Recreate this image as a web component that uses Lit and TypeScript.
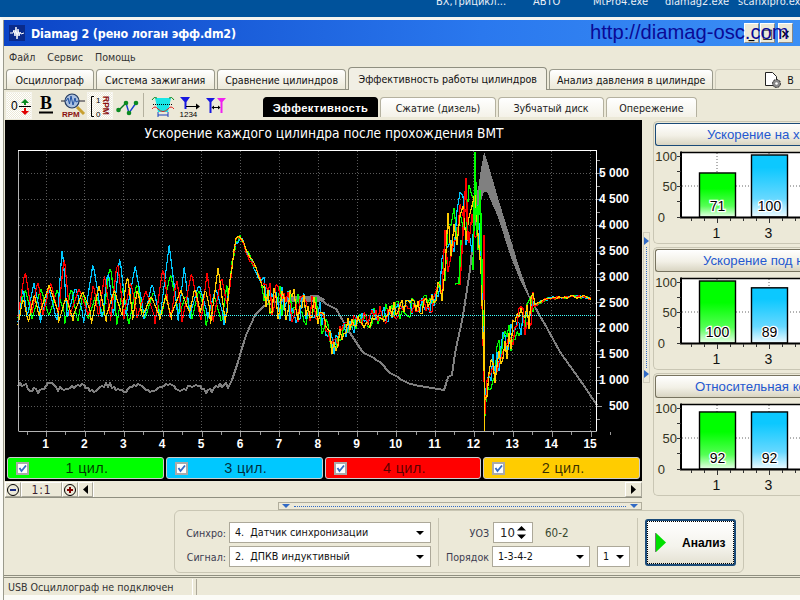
import { LitElement, html, css, svg } from "lit";
import { customElement, property } from "lit/decorators.js";

type Pt = [number, number];

function rng(seed: number) {
  return () => {
    seed = (seed + 0x6d2b79f5) | 0;
    let t = Math.imul(seed ^ (seed >>> 15), 1 | seed);
    t = (t + Math.imul(t ^ (t >>> 7), 61 | t)) ^ t;
    return ((t ^ (t >>> 14)) >>> 0) / 4294967296;
  };
}

function at(pts: Pt[], x: number) {
  for (let i = 1; i < pts.length; i++) {
    if (x <= pts[i][0]) {
      const [x0, y0] = pts[i - 1];
      const [x1, y1] = pts[i];
      return y0 + ((y1 - y0) * (x - x0)) / (x1 - x0);
    }
  }
  return pts[pts.length - 1][1];
}

const MEAN: Pt[] = [
  [228, 300], [232, 265], [236, 242], [240, 236], [246, 250], [255, 268], [262, 283], [270, 298],
  [300, 306], [320, 310], [326, 325], [333, 346], [340, 335], [350, 325], [365, 320], [380, 315],
  [400, 308], [420, 305], [436, 300], [441, 275], [445, 245], [452, 222], [460, 222], [470, 215],
  [478, 225], [483, 240],
];
const AFTER: Pt[] = [
  [485, 405], [490, 380], [500, 352], [510, 338], [520, 325], [530, 310], [538, 303], [550, 298],
  [570, 297], [585, 297], [592, 299],
];
const GREY: Pt[] = [
  [228, 388], [232, 380], [236, 368], [240, 355], [246, 335], [255, 315], [265, 305], [275, 302],
  [295, 300], [318, 299], [325, 303], [337, 310], [345, 325], [353, 337], [363, 352], [380, 362],
  [390, 373], [410, 384], [420, 386], [445, 390], [447, 378], [452, 375], [455, 352], [460, 330],
  [463, 316], [470, 270], [475, 220], [478, 190],
];
const BAND_TOP: Pt[] = [[476, 205], [480, 175], [484, 152], [487, 160], [498, 198], [510, 237], [520, 270], [530, 297]];
const BAND_BOT: Pt[] = [[476, 215], [484, 192], [487, 192], [498, 217], [510, 255], [520, 280], [530, 300]];
const GREY_END: Pt[] = [[530, 298], [540, 316], [547, 328], [560, 352], [580, 380], [597, 405]];

function colorTrace(seed: number, low: number, high: number) {
  const r = rng(seed);
  const pts: string[] = [];
  // idle section: sharp teeth, one per cylinder cycle
  let x = 18;
  let y = 300;
  while (x < 226) {
    const period = 9 + r() * 10;
    const peak = low - r() * high - (r() > 0.75 ? 20 : 0);
    const valley = 326 - r() * 14;
    for (let t = 0; t < period; t += 1.5) {
      const half = period / 2;
      y = t < half ? valley + ((peak - valley) * t) / half : peak + ((valley - peak) * (t - half)) / half;
      if (x + t < 228) pts.push(`${(x + t).toFixed(1)},${y.toFixed(1)}`);
    }
    x += period;
  }
  // run-up and the compression stroke
  for (x = 228; x < 484; x += x > 440 ? 3 : 2) {
    let amp = 4;
    if (x > 262) amp = 17;
    if (x > 325) amp = 10;
    if (x > 440) amp = 34;
    pts.push(`${x},${(at(MEAN, x) + (r() - 0.45) * amp * 2).toFixed(1)}`);
  }
  for (x = 485; x < 592; x += 2) {
    const amp = x < 535 ? 18 : 1.5;
    pts.push(`${x},${(at(AFTER, x) + (r() - 0.5) * amp * 2).toFixed(1)}`);
  }
  return pts.join(" ");
}

function greyTrace() {
  const r = rng(77);
  const pts: string[] = [];
  for (let x = 18; x < 228; x += 2) {
    const y = 388 + Math.sin(x / 4.6) * 3 + (r() - 0.5) * 5;
    pts.push(`${x},${Math.round(y)}`);
  }
  for (let x = 228; x <= 478; x += 2) pts.push(`${x},${Math.round(at(GREY, x))}`);
  return pts.join(" ");
}

const bandPoints = [...BAND_TOP, ...[...BAND_BOT].reverse()].map((p) => p.join(",")).join(" ");
const greyEnd = GREY_END.map((p) => p.join(",")).join(" ");

const TRACES = [
  { color: "#00ff00", points: colorTrace(11, 296, 14) },
  { color: "#00c8ff", points: colorTrace(23, 288, 24) },
  { color: "#ff0000", points: colorTrace(37, 294, 24) },
  { color: "#ffcc00", points: colorTrace(51, 298, 14) },
];
const GREY_LINE = greyTrace();

const Y_LABELS = ["5 000", "4 500", "4 000", "3 500", "3 000", "2 500", "2 000", "1 500", "1 000", "500"];
const X_LABELS = Array.from({ length: 15 }, (_, i) => i + 1);
const xPos = (n: number) => 45.5 + (n - 1) * 38.9;
const yPos = (i: number) => 173 + i * 25.9;

const CYLINDERS = [
  { name: "1 цил.", cls: "c1" },
  { name: "3 цил.", cls: "c3" },
  { name: "4 цил.", cls: "c4" },
  { name: "2 цил.", cls: "c2" },
];

const PANELS = [
  { title: "Ускорение на х", cls: "h0", a: 71, b: 100 },
  { title: "Ускорение под н", cls: "h1", a: 100, b: 89 },
  { title: "Относительная ко", cls: "h2", a: 92, b: 92 },
];

@customElement("mini-chart")
class MiniChart extends LitElement {
  static styles = css`
    :host {
      display: block;
      height: 92px;
    }
    svg {
      display: block;
      font-family: "Liberation Sans", Arial, sans-serif;
    }
  `;

  @property({ type: Number }) a = 0;
  @property({ type: Number }) b = 0;
  @property() gid = "g";

  bar(x: number, v: number, grad: string) {
    const top = 68 - v * 0.62;
    return svg`
      <rect x=${x} y=${top} width="36" height=${68 - top} fill="url(#${grad})" stroke="#000" stroke-width="1.4"></rect>
      <text x=${x + 18} y="62" text-anchor="middle" font-size="14" fill="#000" stroke="#fff" stroke-width="2.5" paint-order="stroke">${v}</text>
    `;
  }

  render() {
    const ticksX = [36, 49, 62, 75, 88, 101, 114, 127, 140];
    const ticksY = [7, 22, 37, 52, 68];
    return html`
      <svg width="147" height="92" viewBox="0 0 147 92">
        <defs>
          <linearGradient id="${this.gid}g" x1="0" y1="0" x2="0" y2="1">
            <stop offset="0.35" stop-color="#00ff00"></stop>
            <stop offset="0.75" stop-color="#55ff55"></stop>
            <stop offset="1" stop-color="#eaffea"></stop>
          </linearGradient>
          <linearGradient id="${this.gid}c" x1="0" y1="0" x2="0" y2="1">
            <stop offset="0.2" stop-color="#0cc8ff"></stop>
            <stop offset="0.7" stop-color="#66d8ff"></stop>
            <stop offset="1" stop-color="#f0fbff"></stop>
          </linearGradient>
        </defs>
        <rect x="26" y="3" width="121" height="65" fill="#fff"></rect>
        <path d="M62 4V68M114 4V68M27 37H147" stroke="#666" stroke-dasharray="1 2" fill="none"></path>
        ${this.bar(44.5, this.a, `${this.gid}g`)} ${this.bar(96.5, this.b, `${this.gid}c`)}
        <path d="M26 3.5H147" stroke="#000" stroke-width="1.5"></path>
        <path d="M26 2.5V69.5M25 68.5H147" stroke="#000" stroke-width="2" fill="none"></path>
        ${ticksX.map(
          (x, i) => svg`<path d="M${x + 0.5} 69V${i === 2 || i === 6 ? 74 : 72}" stroke="#333"></path>`
        )}
        ${ticksY.map((y) => svg`<path d="M22 ${y + 0.5}H26" stroke="#333"></path>`)}
        <text x="22" y="12" text-anchor="end" font-size="13" fill="#332">100</text>
        <text x="22" y="42" text-anchor="end" font-size="13" fill="#332">50</text>
        <text x="10" y="73" text-anchor="end" font-size="13" fill="#332">0</text>
        <text x="61.5" y="89" text-anchor="middle" font-size="14" fill="#111">1</text>
        <text x="113.5" y="89" text-anchor="middle" font-size="14" fill="#111">3</text>
      </svg>
    `;
  }
}

@customElement("app-root")
export class AppRoot extends LitElement {
  static styles = css`
    :host {
      display: block;
      width: 800px;
      height: 600px;
      overflow: hidden;
      background: #ece9d8;
      font-family: "DejaVu Sans Condensed", "DejaVu Sans", "Liberation Sans", sans-serif;
      font-stretch: condensed;
      font-size: 10.6px;
      color: #222;
    }
    .taskbar {
      height: 17px;
      background: #00529b;
      color: #e8eef6;
      display: grid;
      grid-template-columns: 97px 60px 72px 73px 1fr;
      padding-left: 436px;
      overflow: hidden;
      line-height: 10px;
      white-space: nowrap;
      font-size: 11px;
    }
    .taskbar span {
      margin-top: -3px;
    }
    .window {
      height: 583px;
      border-top: 3px solid #f4f4f0;
      border-left: 3px solid #fbfbf6;
      box-sizing: border-box;
      display: flex;
      flex-direction: column;
    }
    .inner {
      border-left: 1px solid #9a9a8c;
      flex: 1;
      display: flex;
      flex-direction: column;
      min-height: 0;
    }
    .title {
      height: 26px;
      flex: none;
      position: relative;
      display: flex;
      align-items: center;
      background: linear-gradient(90deg, #0b44c6, #2a78ee 60%, #3b8ff5);
    }
    .logo {
      margin-left: 5px;
      width: 16px;
      height: 16px;
      background: #0a2a8a;
      flex: none;
    }
    .caption {
      margin-left: 6px;
      font-size: 12.4px;
      letter-spacing: -0.15px;
      font-weight: 700;
      color: #fff;
      white-space: nowrap;
    }
    .url {
      position: absolute;
      left: 586px;
      top: 0;
      font-family: "Liberation Sans", Arial, sans-serif;
      font-stretch: normal;
      font-size: 20.2px;
      line-height: 24px;
      color: #0a0a96;
      white-space: nowrap;
    }
    .winbtns {
      margin-left: auto;
      margin-right: 7px;
      display: flex;
      gap: 1px;
    }
    .winbtns span {
      width: 15px;
      height: 20px;
      background: #ece9d8;
      border: 1px solid #fff;
      border-right-color: #888;
      border-bottom-color: #888;
      box-sizing: border-box;
      display: flex;
      align-items: center;
      justify-content: center;
      font-weight: 700;
      color: #000;
      font-size: 13px;
    }
    .winbtns span:last-child {
      margin-left: 2px;
    }
    .menu {
      height: 22px;
      flex: none;
      display: flex;
      align-items: center;
      padding-left: 5px;
      gap: 12px;
      color: #333;
    }
    .tabs {
      height: 22px;
      flex: none;
      display: flex;
      align-items: flex-end;
      padding-left: 2px;
      gap: 2px;
      border-bottom: 1px solid #8f8f80;
      box-sizing: border-box;
    }
    .tab {
      height: 20px;
      box-sizing: border-box;
      border: 1px solid #9a9a8c;
      border-bottom: none;
      border-radius: 4px 4px 0 0;
      background: linear-gradient(#fff, #ece9d8);
      display: flex;
      align-items: center;
      justify-content: center;
      color: #111;
      white-space: nowrap;
    }
    .tab.on {
      height: 23px;
      margin-bottom: -1px;
      background: #f1efe4;
      border-color: #8f8f80;
    }
    .tab.extra {
      border-color: #cfccbc;
      background: #ece9d8;
      justify-content: flex-start;
      padding-left: 47px;
      gap: 4px;
      margin-right: -20px;
    }
    .toolrow {
      height: 30px;
      flex: none;
      display: flex;
      align-items: flex-end;
      padding-left: 2px;
    }
    .tools {
      display: flex;
      align-self: stretch;
      align-items: center;
      width: 257px;
      flex: none;
    }
    .tool {
      width: 26px;
      height: 27px;
      flex: none;
      margin-right: 1px;
      display: block;
    }
    .tool.pressed {
      background: repeating-conic-gradient(#fff 0 25%, #ece9d8 0 50%) 0 0 / 2px 2px;
      box-shadow: inset 0 0 0 1px #f6f5ee;
    }
    .sep {
      width: 1px;
      height: 24px;
      background: #b4b19f;
      margin: 0 6px 0 2px;
      flex: none;
    }
    .subtabs {
      display: flex;
      gap: 2px;
      height: 20px;
      margin-bottom: 3px;
    }
    .subtab {
      box-sizing: border-box;
      border: 1px solid #b4b19f;
      border-bottom: none;
      border-radius: 4px 4px 0 0;
      background: linear-gradient(#fff, #f4f2e8);
      display: flex;
      align-items: center;
      justify-content: center;
      color: #222;
    }
    .subtab.on {
      background: #000;
      border-color: #000;
      color: #fff;
      font-family: "Liberation Sans", Arial, sans-serif;
      font-stretch: normal;
      font-weight: 700;
      letter-spacing: 0.4px;
      font-size: 11.2px;
    }
    .main {
      height: 390px;
      flex: none;
      display: flex;
      padding-left: 1px;
    }
    .leftcol {
      width: 637px;
      flex: none;
      display: flex;
      flex-direction: column;
    }
    .scope {
      background: #000;
      height: 361px;
      flex: none;
    }
    .scope svg {
      display: block;
    }
    .scope-title {
      font-family: "DejaVu Sans Condensed", "DejaVu Sans", sans-serif;
      font-size: 13.6px;
      fill: #fff;
    }
    .legend {
      display: flex;
      gap: 2px;
      padding: 2px 2px 0;
    }
    .pill {
      flex: 1;
      height: 22px;
      box-sizing: border-box;
      border: 1px solid #ccc;
      border-radius: 3px;
      display: flex;
      align-items: center;
      padding-left: 8px;
      font-family: "Liberation Sans", Arial, sans-serif;
      font-stretch: normal;
      font-size: 14.5px;
      letter-spacing: 0.3px;
      color: rgba(0, 0, 0, 0.78);
    }
    .pill span {
      flex: 1;
      text-align: center;
      padding-right: 18px;
    }
    .c1 {
      background: #00ff00;
    }
    .c3 {
      background: #00c8ff;
    }
    .c4 {
      background: #ff0000;
      color: rgba(60, 0, 0, 0.85);
    }
    .c2 {
      background: #ffcc00;
    }
    .check {
      width: 13px;
      height: 13px;
      box-sizing: border-box;
      background: #fff;
      border: 2px solid #aaa;
      flex: none;
      display: block;
    }
    .scroll {
      height: 16px;
      margin-top: 1px;
      display: flex;
      background: #ece9d8;
      border-bottom: 1px solid #8f8f80;
      box-sizing: border-box;
      flex: none;
    }
    .sbtn {
      box-sizing: border-box;
      border: 1px solid #fff;
      border-right-color: #aaa89a;
      border-bottom-color: #aaa89a;
      display: flex;
      align-items: center;
      justify-content: center;
      flex: none;
      height: 15px;
    }
    .round {
      width: 16px;
    }
    .ratio {
      width: 41px;
      color: #3a2030;
      font-size: 12px;
      letter-spacing: 0.8px;
    }
    .arrow {
      width: 15px;
    }
    .arrow.end {
      width: 17px;
    }
    .track {
      flex: 1;
      border-left: 1px solid #fff;
    }
    .hsplit {
      margin: 4px 0 0 273px;
      height: 8px;
      box-sizing: border-box;
      border: 1px solid #b0ad9c;
      display: flex;
      align-items: center;
      padding: 0 3px;
      gap: 4px;
    }
    .dots {
      flex: 1;
      border-top: 1px dotted #316ac5;
    }
    .tri-down {
      width: 0;
      height: 0;
      border: 4px solid transparent;
      border-top: 4px solid #316ac5;
      border-bottom: none;
    }
    .vsplit {
      width: 7px;
      height: 151px;
      margin: 112px 3px 0 1px;
      box-sizing: border-box;
      border: 1px solid #cfccbc;
      flex: none;
      display: flex;
      flex-direction: column;
      align-items: center;
      padding: 4px 0;
      gap: 2px;
    }
    .vsplit .line {
      flex: 1;
      border-left: 1px dotted #316ac5;
    }
    .tri-right {
      width: 0;
      height: 0;
      border: 4px solid transparent;
      border-left: 5px solid #316ac5;
      border-right: none;
      align-self: flex-start;
    }
    .rightcol {
      flex: 1;
      padding-top: 1px;
      display: flex;
      flex-direction: column;
      gap: 3px;
      min-width: 0;
    }
    .panel {
      height: 123px;
      box-sizing: border-box;
      border: 1px solid #c9c6b4;
      border-right: none;
      border-radius: 5px 0 0 5px;
      padding: 1px 0 0 1px;
      overflow: hidden;
    }
    .phead {
      height: 23px;
      box-sizing: border-box;
      border: 1px solid #77735f;
      border-right: none;
      border-radius: 3px 0 0 3px;
      background: linear-gradient(#fff, #f2f0e6 55%, #d9d5c2);
      color: #2458d0;
      font-family: "Liberation Sans", Arial, sans-serif;
      font-stretch: normal;
      font-size: 13.2px;
      display: flex;
      align-items: center;
      white-space: nowrap;
      overflow: hidden;
      margin-bottom: 3px;
    }
    .phead.h0 {
      padding-left: 51px;
      border-color: #1a4a78;
    }
    .phead.h1 {
      padding-left: 47px;
    }
    .phead.h2 {
      padding-left: 39px;
    }
    .controls {
      height: 63px;
      flex: none;
      width: 570px;
      margin-left: 170px;
      box-sizing: border-box;
      border: 1px solid #c9c6b4;
      border-radius: 6px;
      display: flex;
      align-items: flex-start;
      padding-top: 11px;
      padding-left: 11px;
    }
    .form {
      display: grid;
      grid-template-columns: 43px 202px;
      grid-auto-rows: 21px;
      row-gap: 3px;
      align-items: center;
    }
    .lbl {
      color: #3c3c50;
      text-align: right;
      padding-right: 3px;
      white-space: nowrap;
    }
    .select {
      height: 100%;
      box-sizing: border-box;
      background: #fff;
      border: 1px solid #aca899;
      display: flex;
      align-items: center;
      justify-content: space-between;
      padding: 0 6px 0 5px;
      font-size: 10.7px;
      color: #111;
      white-space: pre;
    }
    .caret {
      width: 0;
      height: 0;
      border: 4px solid transparent;
      border-top: 4px solid #000;
      border-bottom: none;
    }
    .vline {
      width: 1px;
      height: 48px;
      background: #c9c6b4;
      flex: none;
      margin-top: -4px;
      margin-left: 7px;
    }
    .uoz {
      display: grid;
      grid-template-columns: 47px 98px 7px 33px;
      grid-auto-rows: 21px;
      row-gap: 3px;
      align-items: center;
      margin-left: 6px;
    }
    .uoz .select {
      padding-right: 5px;
    }
    .uozrow {
      grid-column: 2 / 5;
      display: flex;
      align-items: center;
      height: 100%;
    }
    .spin {
      width: 40px;
      height: 21px;
      box-sizing: border-box;
      background: #fff;
      border: 1px solid #aca899;
      display: flex;
      align-items: center;
      justify-content: space-between;
      padding: 0 6px;
      font-size: 13px;
      margin-left: 1px;
    }
    .spin svg {
      display: block;
    }
    .gear {
      margin-left: 12px;
      color: #3a4a30;
      font-size: 11.5px;
    }
    .run {
      width: 91px;
      height: 47px;
      margin: -3px 0 0 7px;
      box-sizing: border-box;
      border: 2px solid #1a4a78;
      border-radius: 3px;
      outline: 1px dotted #000;
      outline-offset: -3px;
      background: linear-gradient(#fff, #f4f3ec 60%, #e4e1d2);
      display: flex;
      align-items: center;
      padding-left: 8px;
      font-family: "Liberation Sans", Arial, sans-serif;
      font-stretch: normal;
      font-weight: 700;
      font-size: 12px;
      color: #000;
      flex: none;
    }
    .run svg {
      margin-right: 16px;
      display: block;
    }
    .rule {
      height: 3px;
      flex: none;
      margin-top: 2px;
      border-top: 1px solid #8f8f80;
      border-bottom: 1px solid #8f8f80;
      box-sizing: border-box;
    }
    .status {
      height: 16px;
      flex: none;
      margin-top: 1px;
      display: flex;
      align-items: center;
      color: #333;
    }
    .status .cell {
      width: 189px;
      padding-left: 4px;
      box-sizing: border-box;
      height: 100%;
      display: flex;
      align-items: center;
      border-right: 1px solid #fff;
      white-space: nowrap;
    }
    .status .rest {
      flex: 1;
      height: 100%;
      margin-left: 3px;
      border-left: 1px solid #aca899;
    }
    .foot {
      flex: 1;
      background: #fbfbf6;
    }
    .w88 { width: 88px; }
    .w120 { width: 120px; }
    .w130 { width: 130px; }
    .w200 { width: 200px; }
    .w165 { width: 165px; }
    .w105 { width: 105px; }
    .w115 { width: 115px; }
    .w116 { width: 116px; }
    .w106 { width: 106px; }
    .w91 { width: 91px; }
  `;

  renderLogo() {
    return html`<svg class="logo" viewBox="0 0 16 16">
      <rect width="16" height="16" fill="#0a2a8a"></rect>
      <path d="M1 8H4L5 5 6 11 7 2 8 14 9 4 10 11 11 7 12 9 15 8" stroke="#fff" fill="none"></path>
    </svg>`;
  }

  renderTools() {
    return html`
      <svg class="tool pressed" viewBox="0 0 26 27">
        <text x="5" y="18" font-size="12" font-family="Liberation Sans" fill="#000">0</text>
        <path d="M13 14.5H25" stroke="#000"></path>
        <path d="M19 7L15 11H18V13H20V11H23Z" fill="#0a8a20"></path>
        <path d="M19 23L15 19H18V16H20V19H23Z" fill="#e00000"></path>
      </svg>
      <svg class="tool" viewBox="0 0 26 27">
        <text x="13" y="17" text-anchor="middle" font-size="18" font-weight="700" font-family="Liberation Serif" fill="#000">B</text>
        <path d="M6 20.500H20" stroke="#000" stroke-width="2"></path>
      </svg>
      <svg class="tool" viewBox="0 0 26 27">
        <path d="M17 15L24 22" stroke="#c8a030" stroke-width="3"></path>
        <path d="M1 9H5M19 9H25" stroke="#223" stroke-width="1"></path>
        <circle cx="12" cy="9" r="7" fill="#aac0e0" stroke="#223a60" stroke-width="1.2"></circle>
        <path d="M6 9L8 6 9.500 12 11 4 13 13 15 6 16 10 18 9" stroke="#2050a0" fill="none"></path>
        <text x="2" y="25" font-size="8" font-weight="700" font-family="Liberation Sans" fill="#8a1010">RPM</text>
      </svg>
      <svg class="tool pressed" viewBox="0 0 26 27">
        <path d="M7 4.500H4.500V24.500H7" stroke="#000" fill="none"></path>
        <text x="9" y="11" font-size="8" font-family="Liberation Sans" fill="#000">1</text>
        <text x="9" y="25" font-size="8" font-family="Liberation Sans" fill="#000">0</text>
        <text x="16" y="4" font-size="8.500" font-weight="700" font-family="Liberation Sans" fill="#8a1010" transform="rotate(90 16 4)">RPM</text>
      </svg>
      <svg class="tool" viewBox="0 0 26 27">
        <path d="M5 18L12 11" stroke="#0a7a20" stroke-width="1.400"></path>
        <path d="M12 11L15 21 22 11" stroke="#1840d0" stroke-width="1.400" fill="none"></path>
        <circle cx="4.500" cy="18" r="2.300" fill="#0a8a20"></circle>
        <circle cx="12" cy="11" r="2.300" fill="#0a8a20"></circle>
        <circle cx="15" cy="21" r="2.300" fill="#0a8a20"></circle>
        <circle cx="22" cy="11" r="2.300" fill="#0a8a20"></circle>
      </svg>
      <div class="sep"></div>
      <svg class="tool" viewBox="0 0 26 27">
        <path d="M5 6H21L18 20H8Z" fill="#19e6e6"></path>
        <path d="M2 8Q4 4 7 6M19 6Q22 4 24 8" stroke="#0a8a20" fill="none"></path>
        <path d="M3 12.500H23" stroke="#000" stroke-dasharray="1 1"></path>
        <path d="M2 17Q5 13 8 17 13 22 18 17 21 13 24 17" stroke="#e02020" fill="none"></path>
        <path d="M8 20V25M18 20V25M8 23H18" stroke="#1a40c0" fill="none"></path>
      </svg>
      <svg class="tool" viewBox="0 0 26 27">
        <path d="M3 5H13L9.500 10V17H7.500V10Z" fill="#1818e0"></path>
        <path d="M9 14.500H21" stroke="#000"></path>
        <path d="M19 11.500L23 14.500 19 17.500Z" fill="#000"></path>
        <text x="2.500" y="25" font-size="8" font-family="Liberation Sans" fill="#000">1234</text>
      </svg>
      <svg class="tool" viewBox="0 0 26 27">
        <path d="M2 6H11L7.500 10V21H5.500V10Z" fill="#1818e0"></path>
        <path d="M13 6H22L18.500 10V21H16.500V10Z" fill="#f020f0"></path>
        <path d="M8 15.500H16" stroke="#000"></path>
        <path d="M10 13.500L7.500 15.500 10 17.500ZM14 13.500L16.500 15.500 14 17.500Z" fill="#000"></path>
      </svg>
    `;
  }

  renderScope() {
    const minorX = Array.from({ length: 31 }, (_, i) => 26.5 + i * 19.45);
    const minorY = Array.from({ length: 21 }, (_, i) => 160 + i * 12.95);
    return html`
      <svg width="637" height="335" viewBox="5 120 637 335" font-family="Liberation Sans, Arial, sans-serif">
        <text class="scope-title" x="324" y="138" text-anchor="middle">Ускорение каждого цилиндра после прохождения ВМТ</text>
        <g stroke="#5a5a5a" stroke-dasharray="1 2">
          ${X_LABELS.map((n) => svg`<path d="M${Math.round(xPos(n)) + 0.5} 151V431"></path>`)}
          ${Y_LABELS.map((_, i) => svg`<path d="M19 ${Math.round(yPos(i)) + 0.5}H597"></path>`)}
        </g>
        <polyline points=${GREY_LINE} fill="none" stroke="#808080" stroke-width="2" shape-rendering="crispEdges"></polyline>
        <polygon points=${bandPoints} fill="#808080" shape-rendering="crispEdges"></polygon>
        <polyline points=${greyEnd} fill="none" stroke="#808080" stroke-width="2" shape-rendering="crispEdges"></polyline>
        <polygon points="285,297 318,295 326,300 318,302 285,302" fill="#808080" shape-rendering="crispEdges"></polygon>
        ${TRACES.map(
          (t) => svg`<polyline points=${t.points} fill="none" stroke=${t.color} stroke-width="1.200" stroke-linejoin="bevel" shape-rendering="crispEdges"></polyline>`
        )}
        <polyline points="473,270 474,220 475,152 476,190 478,230 480,190 482,285" fill="none" stroke="#00ff00" stroke-width="1.500" shape-rendering="crispEdges"></polyline>
        <polyline points="458,284 460,284 462,250 466,178 468,240" fill="none" stroke="#ff0000" stroke-width="1.500" shape-rendering="crispEdges"></polyline>
        <polyline points="455,284 459,283 461,240" fill="none" stroke="#00ff00" stroke-width="1.500" shape-rendering="crispEdges"></polyline>
        <path d="M483.500 235V300" stroke="#ff0000" stroke-width="2" shape-rendering="crispEdges"></path>
        <path d="M484.500 300V431" stroke="#ffcc00" stroke-width="1.500" shape-rendering="crispEdges"></path>
        <path d="M18 315.500H597" stroke="#40ffff" stroke-dasharray="1 1"></path>
        <path d="M18.500 431V150.500H596.500V431.500H18.500" fill="none" stroke="#b4b4b4"></path>
        <path d="M18 150.500H597M596.500 150V431" stroke="#fff"></path>
        ${minorX.map((x, i) => svg`<path d="M${Math.round(x) + 0.5} 432V${i % 2 ? 437 : 435}" stroke="#999"></path>`)}
        ${minorY.map((y, i) => svg`<path d="M597 ${Math.round(y) + 0.5}H${i % 2 ? 602 : 600}" stroke="#999"></path>`)}
        <g font-size="12" font-weight="700" fill="#fff">
          ${Y_LABELS.map(
            (l, i) => svg`<text x="629" y=${Math.round(yPos(i)) + 4} text-anchor="end">${l}</text>`
          )}
          ${X_LABELS.map(
            (n) => svg`<text x=${xPos(n)} y="448" text-anchor="middle">${n}</text>`
          )}
        </g>
      </svg>
      <div class="legend">
        ${CYLINDERS.map(
          (c) => html`<div class="pill ${c.cls}">
            <svg class="check" viewBox="0 0 9 9">
              <path d="M1.500 4L3.500 7 8 1.500" stroke="#316ac5" stroke-width="1.800" fill="none"></path>
            </svg>
            <span>${c.name}</span>
          </div>`
        )}
      </div>
    `;
  }

  render() {
    return html`
      <div class="taskbar">
        <span>БХ,трицикл...</span><span>АВТО</span><span>MtPro4.exe</span><span>diamag2.exe</span><span>scanxipro.ex</span>
      </div>
      <div class="window">
        <div class="inner">
          <div class="title">
            ${this.renderLogo()}
            <div class="caption">Diamag 2 (рено логан эфф.dm2)</div>
            <div class="winbtns"><span>_</span><span>□</span><span>×</span></div>
            <div class="url">http://diamag-osc.com</div>
          </div>
          <div class="menu"><span>Файл</span><span>Сервис</span><span>Помощь</span></div>
          <div class="tabs">
            <div class="tab w88">Осциллограф</div>
            <div class="tab w120">Система зажигания</div>
            <div class="tab w130">Сравнение цилиндров</div>
            <div class="tab on w200">Эффективность работы цилиндров</div>
            <div class="tab w165">Анализ давления в цилиндре</div>
            <div class="tab extra w105">
              <svg width="20" height="18" viewBox="0 0 20 18">
                <path d="M2.500 1.500H9.500L13.500 5.500V14.500H2.500Z" fill="#fff" stroke="#222"></path>
                <circle cx="13.500" cy="12.500" r="4" fill="#888" stroke="#222" stroke-dasharray="2 1"></circle>
                <circle cx="13.500" cy="12.500" r="1.300" fill="#fff"></circle>
              </svg>
              <span>В</span>
            </div>
          </div>
          <div class="toolrow">
            <div class="tools">${this.renderTools()}</div>
            <div class="subtabs">
              <div class="subtab on w115">Эффективность</div>
              <div class="subtab w116">Сжатие (дизель)</div>
              <div class="subtab w106">Зубчатый диск</div>
              <div class="subtab w91">Опережение</div>
            </div>
          </div>
          <div class="main">
            <div class="leftcol">
              <div class="scope">${this.renderScope()}</div>
              <div class="scroll">
                <div class="sbtn round">
                  <svg width="14" height="14" viewBox="0 0 14 14">
                    <circle cx="7" cy="7" r="5.500" fill="#ece9d8" stroke="#000"></circle>
                    <path d="M4 7H10" stroke="#1a2a80" stroke-width="2"></path>
                  </svg>
                </div>
                <div class="sbtn ratio">1:1</div>
                <div class="sbtn round">
                  <svg width="14" height="14" viewBox="0 0 14 14">
                    <circle cx="7" cy="7" r="5.500" fill="#ece9d8" stroke="#000"></circle>
                    <path d="M4 7H10M7 4V10" stroke="#800000" stroke-width="2"></path>
                  </svg>
                </div>
                <div class="sbtn arrow">
                  <svg width="6" height="9" viewBox="0 0 6 9"><path d="M5 0V9L0 4.500Z" fill="#000"></path></svg>
                </div>
                <div class="track"></div>
                <div class="sbtn arrow end">
                  <svg width="6" height="9" viewBox="0 0 6 9"><path d="M0 0V9L5 4.500Z" fill="#000"></path></svg>
                </div>
              </div>
              <div class="hsplit">
                <div class="tri-down"></div>
                <div class="dots"></div>
                <div class="tri-down"></div>
              </div>
            </div>
            <div class="vsplit">
              <div class="tri-right"></div>
              <div class="line"></div>
              <div class="tri-right"></div>
            </div>
            <div class="rightcol">
              ${PANELS.map(
                (p, i) => html`<div class="panel">
                  <div class="phead ${p.cls}">${p.title}</div>
                  <mini-chart .a=${p.a} .b=${p.b} gid="m${i}"></mini-chart>
                </div>`
              )}
            </div>
          </div>
          <div class="controls">
            <div class="form">
              <div class="lbl">Синхро:</div>
              <div class="select"><span>4.  Датчик синхронизации</span><i class="caret"></i></div>
              <div class="lbl">Сигнал:</div>
              <div class="select"><span>2.  ДПКВ индуктивный</span><i class="caret"></i></div>
            </div>
            <div class="vline"></div>
            <div class="uoz">
              <div class="lbl">УОЗ</div>
              <div class="uozrow">
                <div class="spin">
                  <span>10</span>
                  <svg width="9" height="15" viewBox="0 0 9 15"><path d="M4.500 1L9 5.500H0ZM4.500 14L9 9.500H0Z" fill="#000"></path></svg>
                </div>
                <span class="gear">60-2</span>
              </div>
              <div class="lbl">Порядок</div>
              <div class="select"><span>1-3-4-2</span><i class="caret"></i></div>
              <div></div>
              <div class="select"><span>1</span><i class="caret"></i></div>
            </div>
            <div class="vline"></div>
            <div class="run">
              <svg width="11" height="19" viewBox="0 0 11 19">
                <path d="M0 0H1V19H0Z" fill="#777"></path>
                <path d="M1 0L11 9.500 1 19Z" fill="#00e000"></path>
              </svg>
              Анализ
            </div>
          </div>
          <div class="rule"></div>
          <div class="status">
            <div class="cell">USB Осциллограф не подключен</div>
            <div class="rest"></div>
          </div>
          <div class="foot"></div>
        </div>
      </div>
    `;
  }
}
